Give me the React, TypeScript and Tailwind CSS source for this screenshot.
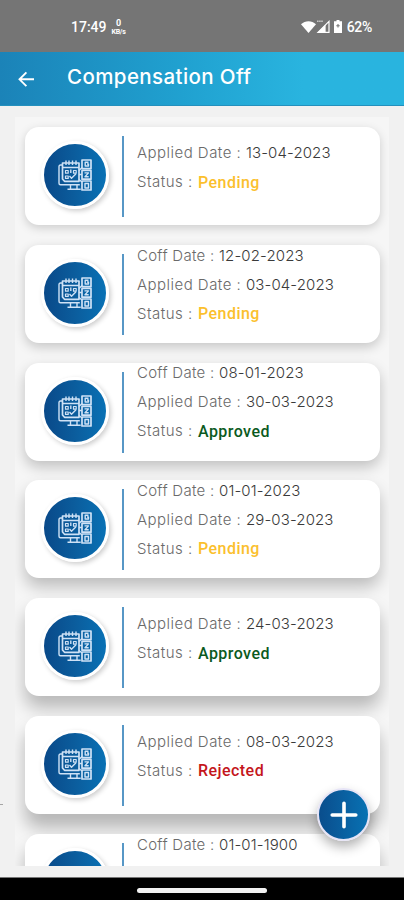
type Status = 'Pending' | 'Approved' | 'Rejected'

interface CompOff {
  coffDate?: string
  appliedDate?: string
  status?: Status
  shadow: string
}

const requests: CompOff[] = [
  { appliedDate: '13-04-2023', status: 'Pending', shadow: 'shadow-[0_3px_10px_rgba(0,0,0,0.17)]' },
  { coffDate: '12-02-2023', appliedDate: '03-04-2023', status: 'Pending', shadow: 'shadow-[0_4px_12px_rgba(0,0,0,0.2)]' },
  { coffDate: '08-01-2023', appliedDate: '30-03-2023', status: 'Approved', shadow: 'shadow-[0_6px_14px_rgba(0,0,0,0.22)]' },
  { coffDate: '01-01-2023', appliedDate: '29-03-2023', status: 'Pending', shadow: 'shadow-[0_9px_16px_rgba(0,0,0,0.23)]' },
  { appliedDate: '24-03-2023', status: 'Approved', shadow: 'shadow-[0_12px_17px_rgba(0,0,0,0.25)]' },
  { appliedDate: '08-03-2023', status: 'Rejected', shadow: 'shadow-[0_14px_17px_rgba(0,0,0,0.26)]' },
  { coffDate: '01-01-1900', shadow: 'shadow-[0_14px_17px_rgba(0,0,0,0.26)]' },
]

const statusColors: Record<Status, string> = {
  Pending: 'text-[#fbc02d]',
  Approved: 'text-[#0b5a1e]',
  Rejected: 'text-[#c4161c]',
}

function StatusBar() {
  return (
    <div className="h-[52px] shrink-0 bg-[#757575] text-white font-[Roboto,sans-serif] flex items-center justify-between pl-[71px] pr-[32px] pt-px">
      <div className="flex items-center gap-[5px]">
        <span className="text-[14px] font-medium leading-none">17:49</span>
        <span className="flex flex-col items-center font-bold">
          <span className="text-[9px] leading-[10px]">0</span>
          <span className="text-[7px] leading-[8px] tracking-[-0.3px]">KB/s</span>
        </span>
      </div>
      <div className="flex items-center">
        <svg width="15" height="12" viewBox="0 0 15 12" fill="currentColor">
          <path d="M0 3.2C4.4-.9 10.6-.9 15 3.2L7.5 12Z" />
        </svg>
        <svg width="15" height="13" viewBox="0 0 15 13">
          <path d="M13 1.4 2 12.3h11Z" fill="none" stroke="currentColor" strokeWidth="1.2" />
          <path d="M9.6 4.8 2 12.3h7.6Z" fill="currentColor" />
          <path d="M1 1.2h6" stroke="currentColor" strokeOpacity=".6" strokeWidth="1.6" strokeDasharray="1.6 .5" />
        </svg>
        <svg className="ml-[3px]" width="8" height="13" viewBox="0 0 8 13">
          <path d="M2.5 0h3v1.3H8V13H0V1.3h2.5Z" fill="currentColor" />
          <path d="M4 4v3.5M2.3 5.7h3.4" stroke="#757575" strokeWidth="1.1" />
        </svg>
        <span className="ml-[5px] text-[14px] font-medium leading-none tracking-[-0.3px]">62%</span>
      </div>
    </div>
  )
}

function Header() {
  return (
    <header className="h-[54px] shrink-0 flex items-center bg-linear-to-r from-[#1b83b8] via-[#20a1d0] via-45% to-[#29b4df] to-75% text-white pl-[18px] border-b border-[#2490bd]">
      <svg width="17" height="16" viewBox="0 0 17 16" fill="none" stroke="currentColor" strokeWidth="1.9">
        <path d="M16 8.3H1.8M8.4 1.4 1.5 8.3l6.9 6.9" />
      </svg>
      <h1 className="ml-[32px] -mt-[2px] text-[20.5px] font-medium tracking-[0.4px] whitespace-nowrap">Compensation Off</h1>
    </header>
  )
}

// calendar on a monitor with a column of option tiles beside it
function CompOffIcon() {
  return (
    <svg width="34" height="32" viewBox="0 0 34 32" fill="none" stroke="#cfe2f6" strokeWidth="1.4" strokeLinejoin="round">
      <path d="M4.5 6H2.5Q1 6 1 7.5v16.8Q1 25.8 2.5 25.8h19.3" />
      <path d="M21 22.3H6.5L4.5 20V4H21Z" strokeWidth="1.7" />
      <path d="M4.5 8.5H21M8 1.5V6M11 1.5V6M14.5 1.5V6M18 1.5V6" />
      <path d="M7.5 11.5h2.7v2.7H7.5ZM15.5 11.5h2.7v2.7h-2.7ZM7.5 17h2.7v2.4H7.5Z" strokeWidth="1.2" />
      <path d="m11.5 17 2 2.2 4.5-4.4M12.8 10.5v3.5" />
      <path d="M12.5 26v3.7M19 26v3.7M9.5 30.2h13.2" />
      <path d="M24 1h9v8.7h-9ZM24 11.5h9v8.7h-9ZM24 22h9v9h-9Z" strokeWidth="1.7" />
      <path d="M30.5 3.2h-3.3v3.8h3.3V5H29M26.5 13.9h4l-3.5 3.8h3.7M27 24.5h3.5V29H27Z" />
      <path d="M21 11.5l3-3M21 15.5h3M21 20.5l3 2.5" />
    </svg>
  )
}

function Row({ label, value, labelClass }: { label: string; value: string; labelClass: string }) {
  return (
    <div className="flex h-[29px] items-center whitespace-pre text-[15px] font-light">
      <span className={`text-[#6a6a6a] ${labelClass}`}>{label} : </span>
      <span className="text-[#3a3a3a] tracking-[0.12px]">{value}</span>
    </div>
  )
}

function RequestCard({ item }: { item: CompOff }) {
  return (
    <article className={`h-[98px] shrink-0 flex items-start rounded-[14px] bg-white ${item.shadow}`}>
      <div className="ml-[16px] mt-[14px] size-[68px] shrink-0 rounded-full border-[3px] border-white bg-linear-to-r from-[#094787] via-[#0b5d9d] to-[#0873b7] bg-origin-border shadow-[2px_2px_5px_rgba(0,0,0,0.2)] flex items-center justify-center">
        <CompOffIcon />
      </div>
      <div className="ml-[13px] mt-[9px] h-[81px] w-[2px] shrink-0 bg-[#5797c6]" />
      <div className={item.coffDate ? 'ml-[13px] -mt-[3.5px]' : 'ml-[13px] mt-[12px]'}>
        {item.coffDate && <Row label="Coff Date" value={item.coffDate} labelClass="tracking-[0.28px]" />}
        {item.appliedDate && <Row label="Applied Date" value={item.appliedDate} labelClass="tracking-[0.47px]" />}
        {item.status && (
          <div className="flex h-[29px] items-center whitespace-pre text-[15px] font-light">
            <span className="w-[61px] text-[#6a6a6a] tracking-[0.5px]">Status :</span>
            <span className={`font-[Roboto,sans-serif] text-[16px] font-medium tracking-[0.45px] ${statusColors[item.status]}`}>
              {item.status}
            </span>
          </div>
        )}
      </div>
    </article>
  )
}

export default function App() {
  return (
    <div className="relative flex h-[900px] w-[404px] flex-col overflow-hidden bg-[#f1f1f1] font-[Inter,sans-serif]">
      <StatusBar />
      <Header />
      <main className="mx-[15px] mt-[11px] flex h-[749px] shrink-0 flex-col gap-[19.8px] overflow-hidden bg-[#f6f6f6] pl-[10px] pr-[9px] pt-[10px]">
        {requests.map((item) => (
          <RequestCard key={item.coffDate ?? item.appliedDate} item={item} />
        ))}
      </main>
      <div className="absolute left-0 top-[804px] h-px w-[3px] bg-[#a5a5a5]" />
      <button
        aria-label="Add request"
        className="absolute left-[317px] top-[788px] size-[53px] rounded-full border-2 border-[#e6e4f6] bg-linear-to-r from-[#0a4c8b] to-[#0873b5] bg-origin-border shadow-[0_6px_12px_rgba(0,0,0,0.3)] flex items-center justify-center"
      >
        <svg width="28" height="28" viewBox="0 0 28 28" stroke="#fff" strokeWidth="3.6" strokeLinecap="round">
          <path d="M14 2.2v23.6M2.2 14h23.6" />
        </svg>
      </button>
      <div className="mt-auto h-[23px] shrink-0 border-t border-[#777] bg-black pt-[10px]">
        <div className="mx-auto h-[5px] w-[130px] rounded-full bg-[#f2f2f2]" />
      </div>
    </div>
  )
}
